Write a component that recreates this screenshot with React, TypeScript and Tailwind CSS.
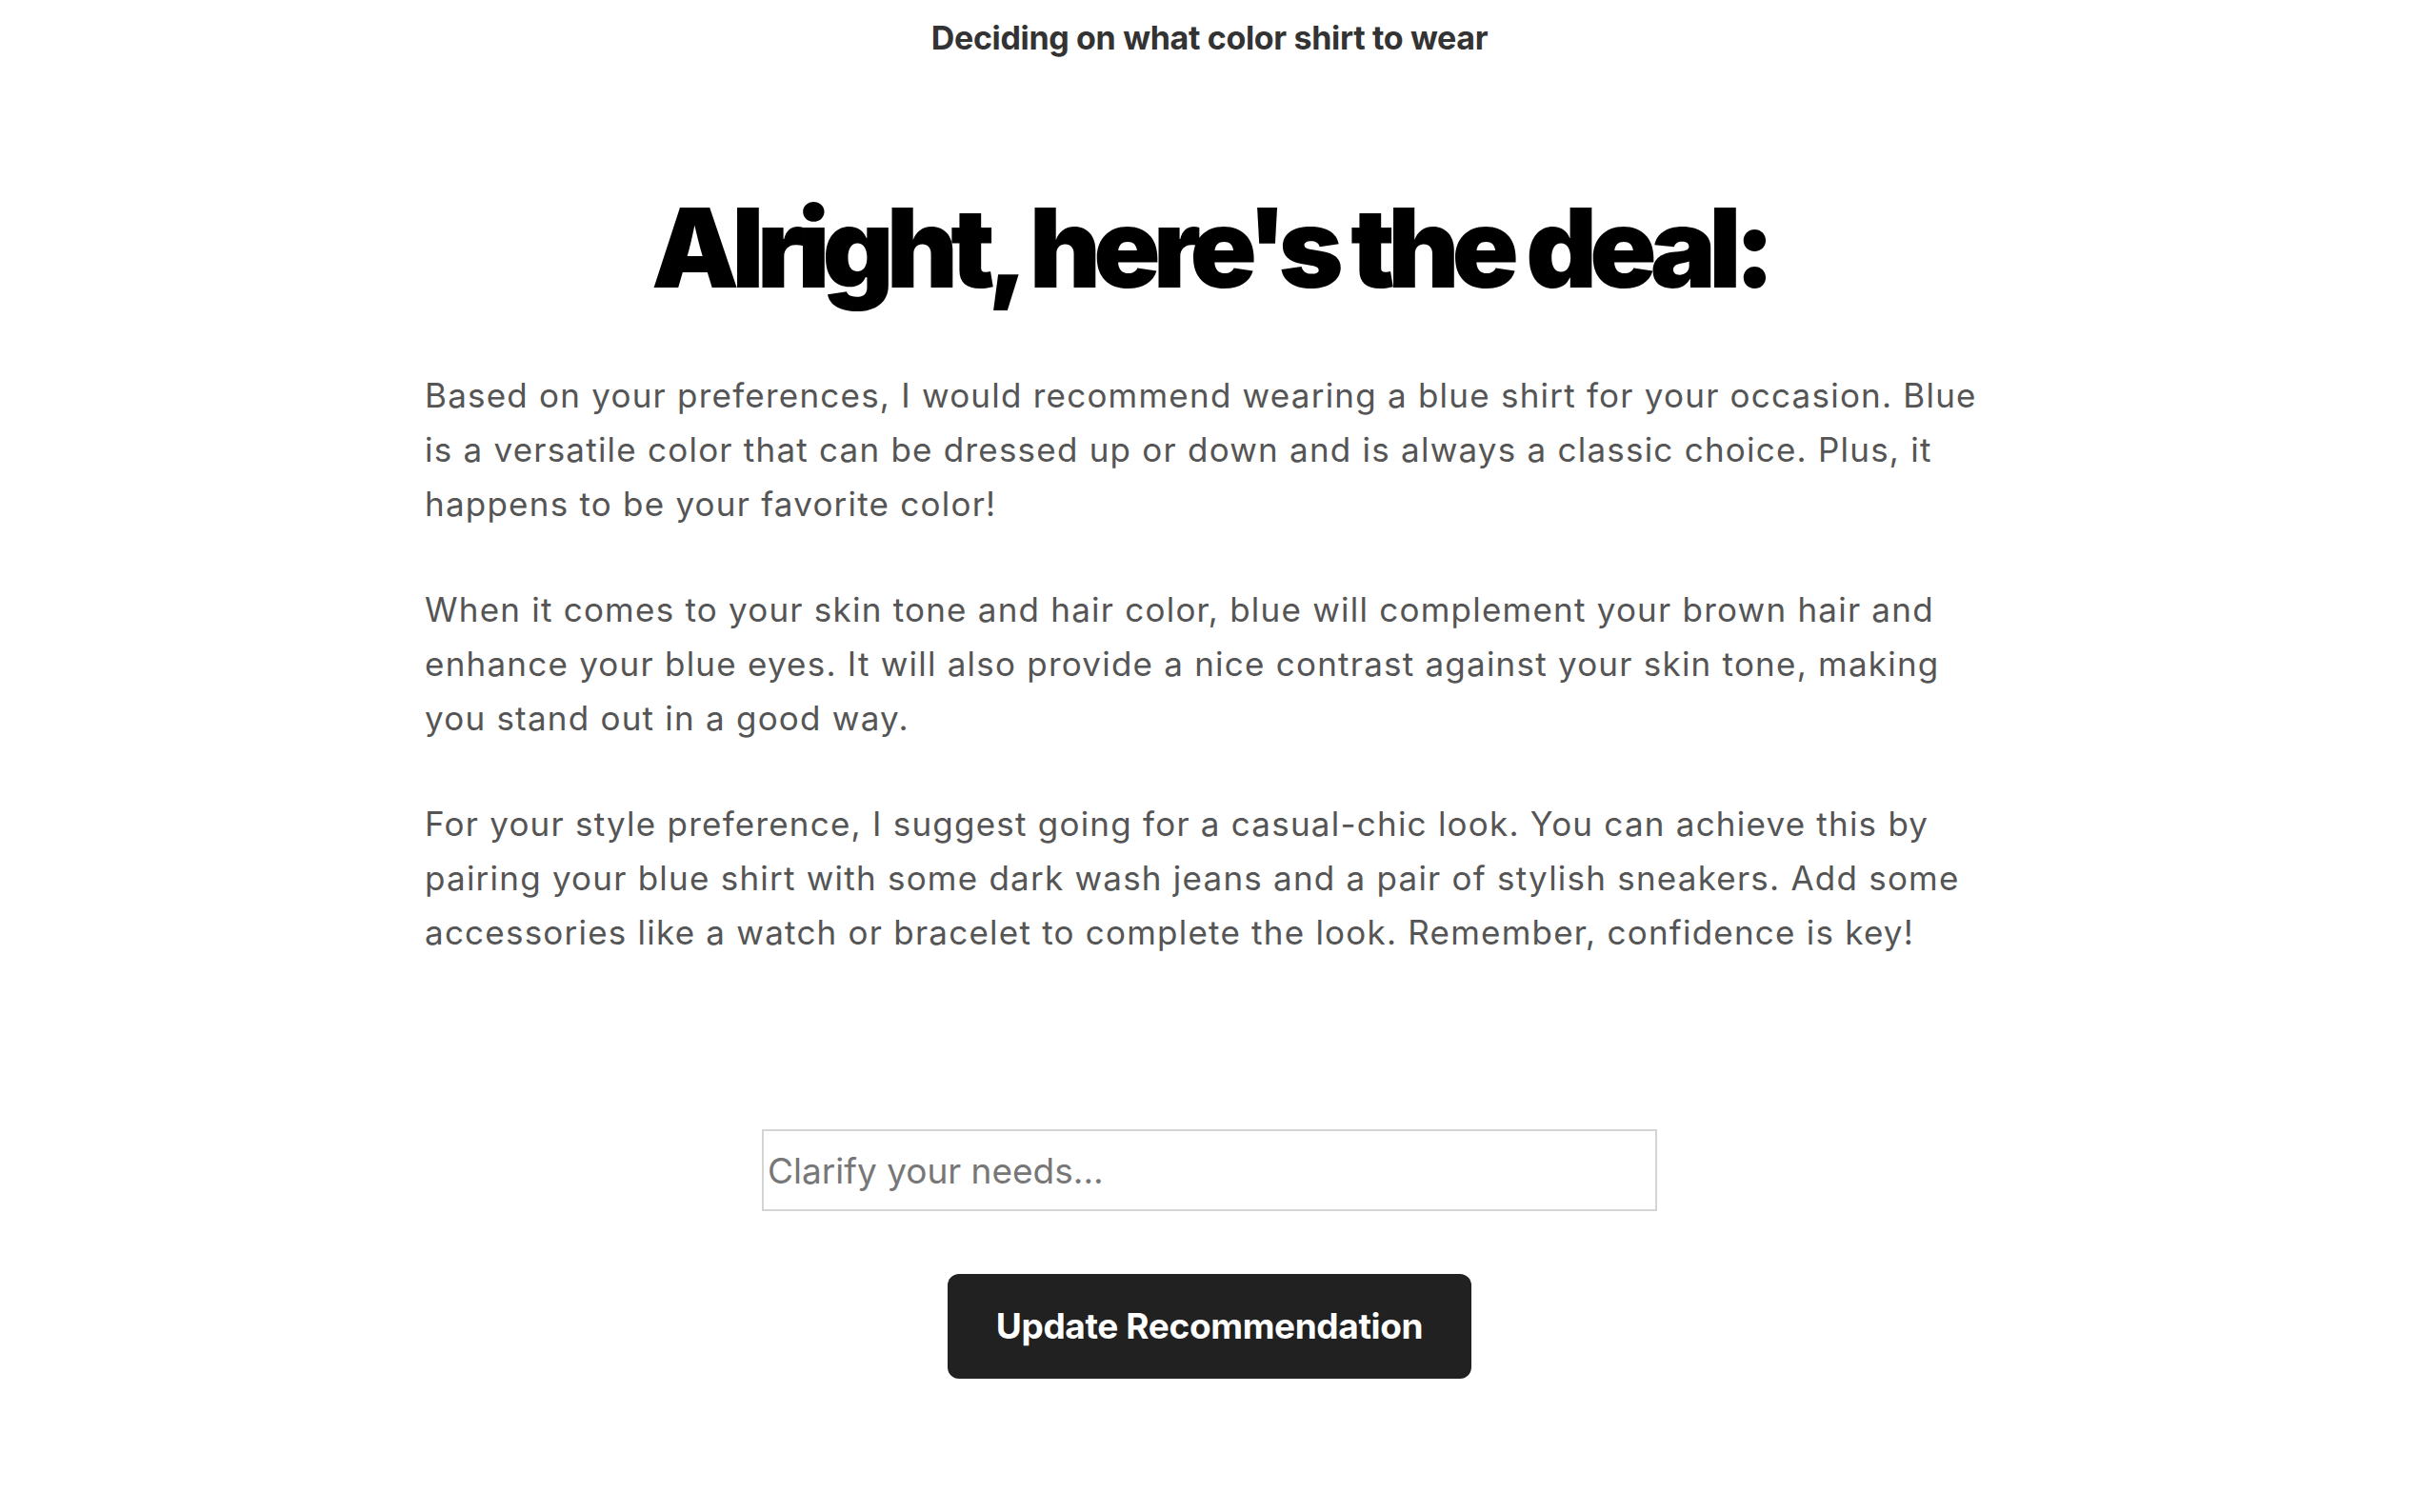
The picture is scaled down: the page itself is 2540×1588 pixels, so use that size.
import { useState } from "react"

const paragraphs = [
    "Based on your preferences, I would recommend wearing a blue shirt for your occasion. Blue is a versatile color that can be dressed up or down and is always a classic choice. Plus, it happens to be your favorite color!",
    "When it comes to your skin tone and hair color, blue will complement your brown hair and enhance your blue eyes. It will also provide a nice contrast against your skin tone, making you stand out in a good way.",
    "For your style preference, I suggest going for a casual-chic look. You can achieve this by pairing your blue shirt with some dark wash jeans and a pair of stylish sneakers. Add some accessories like a watch or bracelet to complete the look. Remember, confidence is key!",
]

export default function App() {
    const [needs, setNeeds] = useState("")

    return (
        <div className="min-h-screen bg-white font-['Inter',sans-serif] flex flex-col items-center">
            <header className="pt-5 text-[34px] leading-[40px] font-bold text-[#333333] tracking-[-0.01em]">
                Deciding on what color shirt to wear
            </header>

            <main className="flex flex-col items-center">
                <h1 className="mt-[142px] text-[116px] leading-none font-black text-black tracking-[-0.068em]">
                    Alright, here's the deal:
                </h1>

                <div className="mt-[69px] w-[1648px] flex flex-col gap-[54px]">
                    {paragraphs.map((p, i) => (
                        <p key={i} className="text-[35px] leading-[57px] text-[#555555] tracking-[0.035em]">
                            {p}
                        </p>
                    ))}
                </div>

                <input
                    value={needs}
                    onChange={(e) => setNeeds(e.target.value)}
                    placeholder="Clarify your needs..."
                    className="mt-[178px] w-[940px] h-[86px] border-2 border-[#d4d4d4] px-[4px] text-[37px] text-[#333] placeholder:text-[#777777] outline-none"
                />

                <button className="mt-[66px] w-[550px] h-[110px] rounded-[12px] bg-[#212121] text-white text-[37px] font-bold tracking-[-0.01em]">
                    Update Recommendation
                </button>
            </main>
        </div>
    )
}
